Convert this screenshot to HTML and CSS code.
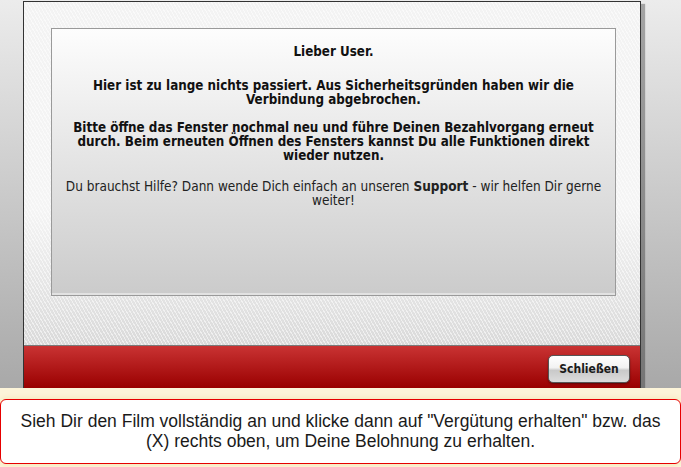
FILE: index.html
```html
<!DOCTYPE html>
<html lang="de">
<head>
    <meta charset="UTF-8">
    <meta name="viewport" content="width=device-width, initial-scale=1.0">
    <title>Verbindung abgebrochen</title>
    <link rel="stylesheet" href="styles.css">
</head>
<body>
    <div class="stage">
        <div class="dialog">
            <div class="dialog_body">
                <div class="msg_box">
                    <p class="msg_title">Lieber User.</p>
                    <p class="msg_strong">Hier ist zu lange nichts passiert. Aus Sicherheitsgründen haben wir die Verbindung abgebrochen.</p>
                    <p class="msg_strong msg_gap">Bitte öffne das Fenster nochmal neu und führe Deinen Bezahlvorgang erneut durch. Beim erneuten Öffnen des Fensters kannst Du alle Funktionen direkt wieder nutzen.</p>
                    <p class="msg_help">Du brauchst Hilfe? Dann wende Dich einfach an unseren <b>Support</b> - wir helfen Dir gerne weiter!</p>
                </div>
            </div>
            <div class="dialog_footer">
                <button class="close_btn">Schließen</button>
            </div>
        </div>
    </div>

    <div class="notice_bar">
        <div class="notice_box">
            Sieh Dir den Film vollständig an und klicke dann auf "Vergütung erhalten" bzw. das (X) rechts oben, um Deine Belohnung zu erhalten.
        </div>
    </div>
</body>
</html>
```

FILE: styles.css
```css
* {
  margin: 0;
  padding: 0;
  box-sizing: border-box;
}

body {
  background: linear-gradient(to bottom, #ececec 0px, #a8a8a8 390px) no-repeat, #fcf4d9;
  overflow: hidden;
}

.stage {
  padding: 1px 0 0 23px;
}

.dialog {
  width: 618px;
  border: 1px solid #333;
  border-bottom: none;
  box-shadow: 4px 3px 1px rgba(0, 0, 0, 0.3);
}

.dialog_body {
  padding: 26px 24px 49px 27px;
  background:
    repeating-linear-gradient(60deg, rgba(255, 255, 255, 0.55) 0px, rgba(255, 255, 255, 0.55) 1px, transparent 1px, transparent 3px),
    linear-gradient(to bottom, #f3f3f3, #f5f5f5 60%, #dadada);
}

.msg_box {
  height: 268px;
  border: 1px solid #9a9a9a;
  background: linear-gradient(to bottom, #fdfdfd, #cbcbcb);
  box-shadow: inset 0 -2px 0 #e2e2e2;
  padding: 16px 16px 0 16px;
  text-align: center;
  color: #111;
  font-family: "DejaVu Sans Condensed", "DejaVu Sans", sans-serif;
  font-size: 13.3px;
  line-height: 14px;
}

.msg_title {
  font-weight: bold;
  margin-bottom: 20px;
}

.msg_strong {
  font-weight: bold;
  margin-bottom: 14px;
}

.msg_gap {
  margin-bottom: 16px;
}

.msg_help {
  color: #222;
  font-size: 13.5px;
  font-weight: normal;
  margin: 0 -4px;
}

.dialog_footer {
  height: 43px;
  border-top: 1px solid #7a7a7a;
  background: linear-gradient(to bottom, #c93333, #a30a0a 80%, #990000);
  display: flex;
  justify-content: flex-end;
  align-items: flex-start;
  padding: 9px 10px 0 0;
}

.close_btn {
  width: 82px;
  height: 28px;
  border: 1px solid #555;
  border-radius: 5px;
  background: linear-gradient(to bottom, #ffffff, #f2f2f2 45%, #c9c9c9 55%, #dcdcdc);
  box-shadow: 0 1px 2px rgba(0, 0, 0, 0.4);
  color: #1a1a1a;
  font-family: "DejaVu Sans Condensed", "DejaVu Sans", sans-serif;
  font-weight: bold;
  font-size: 12px;
  cursor: pointer;
}

.notice_bar {
  background: #fcf4d9;
  padding: 11px 0 3px 0;
}

.notice_box {
  background: #fff;
  border: 1px solid #e60000;
  border-radius: 6px;
  box-shadow: 0 0 6px #f3e2b0;
  padding: 11px 8px 12px 8px;
  text-align: center;
  color: #1a1a1a;
  font-family: "Liberation Sans", Arial, sans-serif;
  font-size: 17.5px;
  line-height: 20px;
}
```
